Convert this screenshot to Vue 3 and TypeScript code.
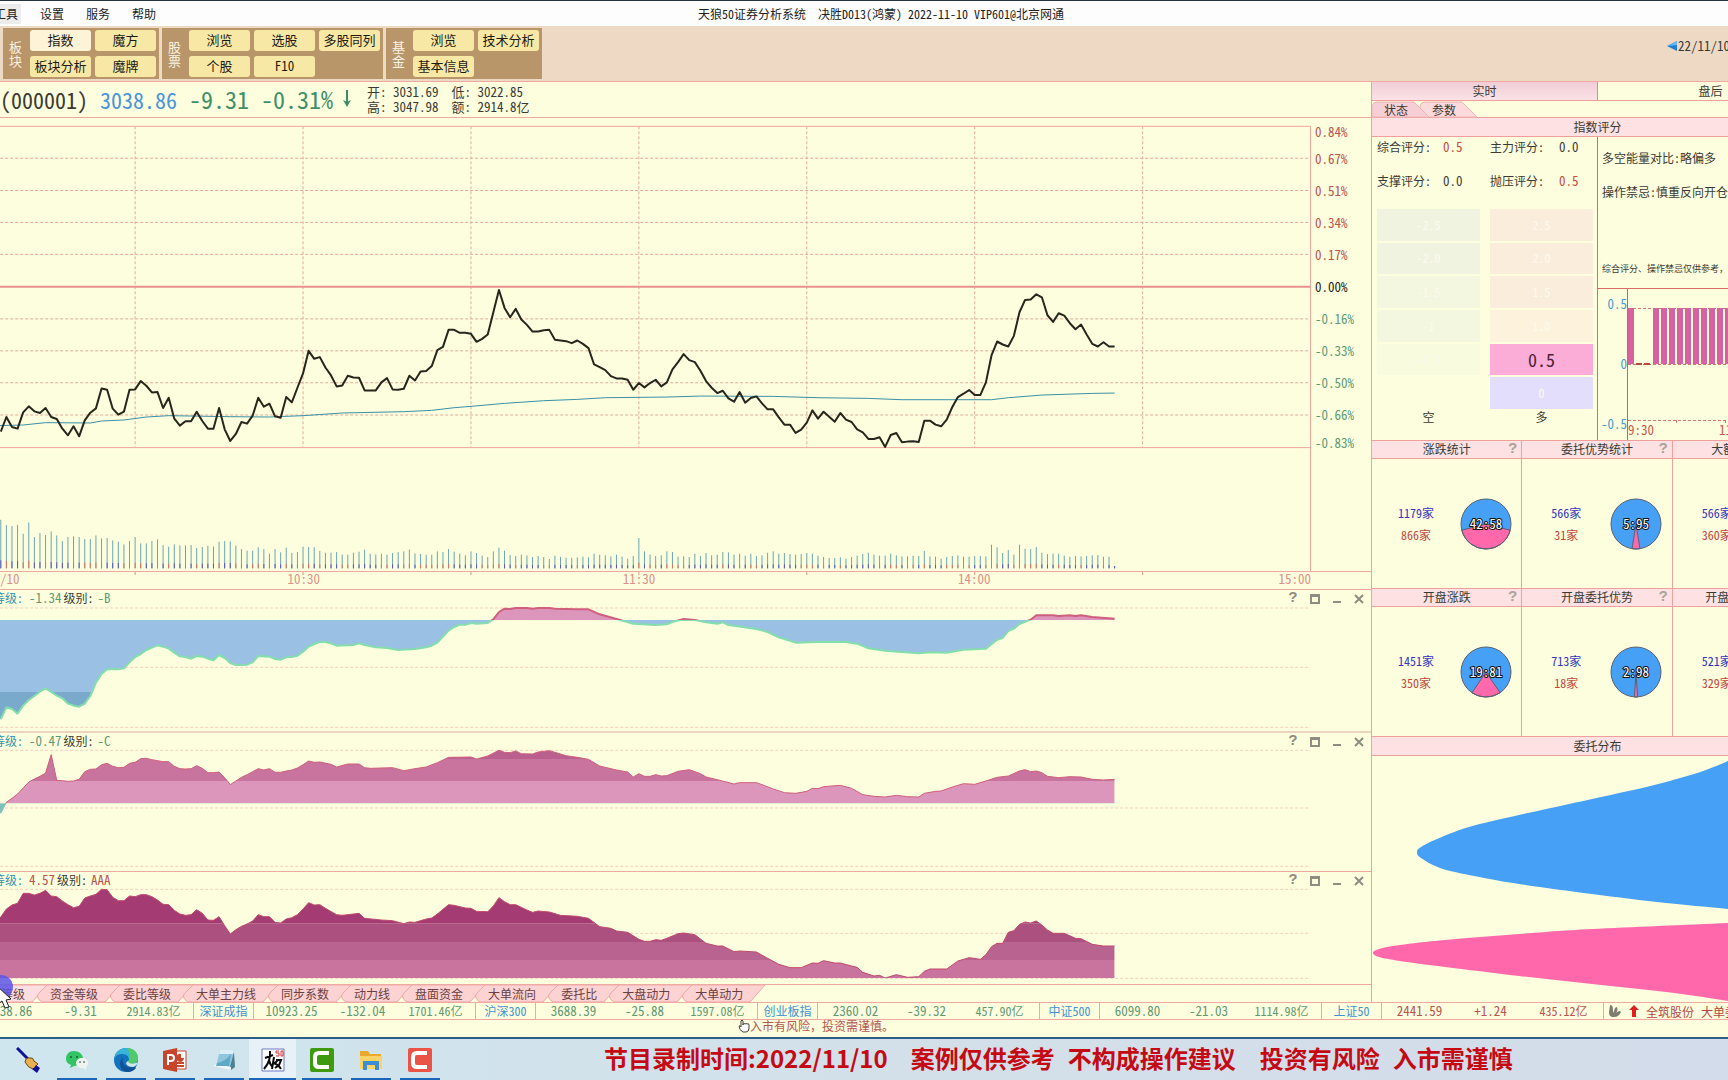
<script setup lang="ts">
type Point = [number, number]

const menus = ['工具', '设置', '服务', '帮助']

const toolGroups = [
  { name: '板块', cols: 2, items: ['指数', '魔方', '板块分析', '魔牌'], active: '指数' },
  { name: '股票', cols: 3, items: ['浏览', '选股', '多股同列', '个股', 'F10'], active: '' },
  { name: '基金', cols: 2, items: ['浏览', '技术分析', '基本信息'], active: '' },
]

const percentLabels = ['0.84%', '0.67%', '0.51%', '0.34%', '0.17%', '0.00%', '-0.16%', '-0.33%', '-0.50%', '-0.66%', '-0.83%']
const timeLabels = ['/10', '10:30', '11:30', '14:00', '15:00']
const gridRows = [115, 212, 308, 404, 598, 694, 790, 887]
const gridMinutes = [24, 54, 84, 114, 144, 174, 204]

/* one value per minute, in chart units counted down from the top */
const price = [
  937, 893, 923, 928, 879, 861, 876, 881, 866, 893, 899, 928, 948, 921, 951, 903, 880, 867, 807, 811,
  868, 886, 877, 811, 810, 785, 799, 819, 818, 866, 835, 898, 919, 906, 906, 877, 905, 928, 928, 866,
  930, 965, 944, 908, 913, 889, 835, 862, 853, 891, 895, 833, 849, 805, 762, 694, 718, 713, 744, 768,
  801, 798, 769, 774, 775, 813, 813, 813, 789, 776, 810, 811, 808, 769, 783, 756, 755, 740, 692, 682,
  631, 631, 640, 640, 643, 667, 658, 645, 578, 511, 565, 593, 568, 600, 616, 636, 636, 632, 631, 661,
  663, 665, 671, 663, 673, 686, 735, 743, 752, 770, 777, 777, 781, 811, 791, 804, 791, 781, 801, 789,
  750, 728, 704, 722, 728, 754, 785, 805, 821, 814, 837, 847, 818, 850, 836, 831, 852, 870, 870, 894,
  916, 916, 941, 931, 910, 873, 898, 877, 892, 907, 881, 901, 908, 930, 939, 959, 959, 954, 983, 947,
  941, 969, 967, 966, 968, 904, 904, 916, 921, 901, 863, 833, 823, 812, 827, 827, 789, 708, 666, 675,
  681, 649, 578, 541, 540, 524, 533, 587, 607, 581, 588, 611, 629, 615, 645, 673, 681, 668, 681, 681,
]

const average: Point[] = [
  [-1, 919], [4, 917], [8, 910], [16, 911], [18, 905], [22, 902], [26, 893], [30, 889], [41, 892], [48, 893],
  [54, 889], [61, 881], [72, 877], [77, 873], [81, 865], [84, 861], [90, 852], [97, 844], [103, 840], [108, 835],
  [119, 833], [125, 830], [138, 831], [146, 835], [155, 837], [161, 841], [177, 841], [180, 835], [186, 827],
  [195, 822], [199, 821],
]

const volume = [
  146, 130, 127, 131, 104, 138, 94, 106, 100, 111, 99, 82, 94, 96, 94, 88, 88, 99, 90, 91,
  84, 80, 72, 82, 94, 75, 75, 82, 87, 70, 65, 72, 69, 69, 70, 61, 64, 68, 66, 80,
  82, 81, 68, 58, 53, 53, 63, 58, 44, 58, 48, 62, 46, 49, 65, 64, 63, 52, 47, 47,
  49, 41, 41, 47, 50, 56, 44, 42, 44, 41, 46, 49, 51, 56, 45, 43, 41, 41, 51, 49,
  58, 50, 44, 39, 51, 46, 38, 34, 51, 62, 53, 40, 37, 41, 39, 34, 37, 34, 28, 38,
  34, 32, 32, 33, 35, 33, 44, 41, 39, 36, 41, 35, 29, 37, 91, 51, 41, 37, 39, 51,
  49, 35, 36, 34, 44, 37, 46, 39, 41, 49, 48, 41, 44, 38, 44, 37, 39, 47, 51, 44,
  46, 43, 41, 43, 46, 44, 38, 34, 31, 31, 33, 29, 34, 38, 43, 47, 41, 38, 38, 44,
  39, 36, 36, 38, 37, 52, 36, 35, 29, 34, 37, 39, 35, 35, 37, 37, 36, 71, 63, 46,
  55, 41, 71, 59, 58, 64, 47, 43, 44, 44, 38, 35, 37, 36, 37, 39, 40, 35, 35, 7,
]
const volumeBase = 1348
const isRise = (i: number) => i > 0 && price[i] < price[i - 1]
const volumePath = volume.map((v, i) => `M${i},${volumeBase}v${-v}`).join('')
const basePath = (rise: boolean) =>
  volume.map((v, i) => (isRise(i) === rise ? `M${i},${volumeBase}v${-Math.round(v * 0.12 + 6)}` : '')).join('')

const line = (pts: Point[]) => pts.map((p) => p.join(',')).join(' ')
const area = (pts: Point[], base: number) => `-1,${base} -1,${pts[0][1]} ${line(pts)} 199,${base}`
const pricePoints = line(price.map((v, i) => [i, v] as Point))

interface Panel {
  id: string
  value: string
  grade: string
  tone: string
  top: number
  height: number
  base: number
  dashes: number[]
  bands: { from: number; to: number; fill: string }[]
  up: string
  down: string
  points: Point[]
}

const panels: Panel[] = [
  {
    id: 'p1', value: '-1.34', grade: '-B', tone: 'down', top: 318, height: 375, base: 360,
    dashes: [324, 502, 682],
    bands: [
      { from: 318, to: 360, fill: '#dd96bb' },
      { from: 360, to: 576, fill: '#9ac0e3' },
      { from: 576, to: 693, fill: '#7aaacb' },
    ],
    up: '#cf5f7c', down: '#84deac',
    points: [
      [0, 658], [1, 622], [2, 627], [3, 641], [4, 617], [5, 600], [6, 588], [7, 575], [8, 565], [9, 576], [10, 587],
      [11, 595], [12, 611], [13, 617], [14, 620], [15, 611], [16, 588], [17, 548], [18, 522], [19, 508], [20, 507],
      [21, 508], [22, 505], [23, 487], [24, 471], [25, 462], [26, 450], [27, 443], [28, 436], [29, 440], [30, 446],
      [31, 458], [32, 469], [33, 471], [34, 476], [35, 468], [36, 470], [37, 476], [38, 481], [39, 465], [40, 474],
      [41, 489], [42, 495], [43, 495], [44, 494], [45, 487], [46, 468], [48, 470], [49, 477], [50, 479], [51, 472],
      [52, 471], [53, 467], [54, 455], [55, 440], [56, 432], [57, 426], [58, 426], [59, 430], [60, 437], [63, 435],
      [64, 430], [65, 435], [67, 442], [69, 444], [71, 450], [74, 447], [76, 442], [77, 437], [78, 428], [79, 410],
      [80, 392], [81, 381], [82, 374], [83, 374], [84, 369], [85, 371], [87, 369], [88, 358], [89, 336], [90, 326],
      [91, 327], [92, 324], [94, 324], [95, 326], [96, 324], [98, 324], [99, 326], [103, 328], [105, 328], [107, 343],
      [110, 357], [113, 371], [117, 375], [119, 373], [120, 366], [122, 357], [124, 360], [126, 367], [128, 371],
      [129, 367], [130, 375], [135, 387], [137, 396], [139, 412], [142, 428], [147, 425], [151, 426], [153, 431],
      [155, 445], [158, 452], [164, 460], [166, 457], [169, 458], [172, 449], [176, 446], [178, 419], [179, 414],
      [180, 393], [181, 386], [182, 372], [184, 359], [185, 346], [188, 346], [189, 348], [191, 346], [192, 348],
      [193, 346], [195, 351], [199, 356],
    ],
  },
  {
    id: 'p2', value: '-0.47', grade: '-C', tone: 'down', top: 747, height: 366, base: 910,
    dashes: [751, 924, 1099],
    bands: [
      { from: 747, to: 777, fill: '#b9608f' },
      { from: 777, to: 843, fill: '#c8749f' },
      { from: 843, to: 910, fill: '#dd96bb' },
      { from: 910, to: 1113, fill: '#7fc0bc' },
    ],
    up: '#cf5f7c', down: '#7fc0bc',
    points: [
      [0, 940], [1, 907], [2, 895], [3, 882], [4, 864], [5, 846], [6, 837], [7, 829], [8, 819], [9, 764], [10, 841],
      [11, 842], [12, 844], [13, 843], [14, 838], [15, 815], [16, 808], [17, 807], [18, 794], [19, 790], [20, 799],
      [21, 803], [22, 802], [23, 790], [24, 787], [25, 776], [26, 775], [27, 779], [28, 782], [29, 785], [30, 785],
      [31, 799], [32, 806], [33, 807], [34, 806], [35, 797], [36, 805], [37, 818], [38, 818], [39, 816], [40, 833],
      [41, 854], [42, 843], [43, 832], [44, 824], [45, 815], [46, 806], [47, 810], [48, 806], [49, 817], [50, 817],
      [51, 813], [52, 810], [53, 804], [54, 794], [55, 783], [56, 787], [57, 786], [59, 793], [60, 801], [62, 792],
      [64, 792], [65, 803], [66, 805], [70, 803], [72, 812], [74, 806], [76, 801], [78, 788], [80, 772], [84, 771],
      [85, 777], [87, 768], [89, 751], [90, 757], [91, 758], [92, 753], [93, 761], [95, 762], [96, 756], [98, 752],
      [99, 757], [101, 767], [103, 772], [105, 778], [107, 798], [110, 810], [112, 816], [113, 831], [114, 821],
      [115, 829], [116, 829], [117, 824], [118, 828], [119, 827], [121, 814], [123, 809], [125, 821], [126, 831],
      [128, 839], [131, 852], [132, 848], [135, 848], [136, 854], [138, 867], [140, 878], [142, 880], [144, 874],
      [145, 865], [146, 866], [147, 860], [150, 856], [152, 865], [154, 884], [156, 889], [158, 891], [160, 886],
      [162, 890], [164, 891], [165, 880], [167, 874], [168, 873], [170, 861], [172, 851], [174, 853], [176, 843],
      [178, 832], [180, 828], [182, 813], [183, 809], [184, 815], [185, 813], [186, 818], [187, 829], [189, 833],
      [191, 830], [193, 831], [195, 838], [197, 840], [199, 838],
    ],
  },
  {
    id: 'p3', value: '4.57', grade: 'AAA', tone: 'up', top: 324, height: 288, base: 594,
    dashes: [328, 460, 595],
    bands: [
      { from: 324, to: 431, fill: '#a53b73' },
      { from: 431, to: 486, fill: '#ac5080' },
      { from: 486, to: 540, fill: '#b96490' },
      { from: 540, to: 594, fill: '#c8749f' },
    ],
    up: '#c04a6c', down: '#84deac',
    points: [
      [0, 411], [1, 387], [2, 375], [3, 370], [4, 340], [5, 340], [6, 345], [7, 340], [8, 331], [9, 348], [10, 350],
      [11, 363], [12, 374], [13, 383], [14, 379], [15, 354], [16, 348], [17, 343], [18, 328], [19, 329], [20, 352],
      [21, 362], [22, 362], [23, 348], [24, 350], [25, 344], [26, 344], [27, 350], [28, 360], [29, 373], [30, 374],
      [31, 391], [32, 402], [33, 406], [34, 404], [35, 389], [36, 400], [37, 420], [38, 421], [39, 410], [40, 437],
      [41, 462], [42, 449], [43, 439], [44, 432], [45, 423], [46, 404], [47, 410], [48, 410], [49, 427], [50, 429],
      [51, 417], [52, 413], [53, 404], [54, 387], [55, 368], [56, 375], [57, 374], [58, 385], [60, 404], [61, 406],
      [63, 402], [64, 400], [65, 415], [68, 420], [70, 422], [72, 431], [73, 426], [74, 427], [76, 417], [77, 414],
      [78, 402], [79, 388], [80, 374], [81, 376], [83, 384], [84, 385], [85, 394], [87, 395], [88, 378], [89, 353],
      [90, 365], [91, 374], [92, 374], [94, 390], [95, 397], [96, 393], [98, 396], [100, 406], [103, 409], [105, 415],
      [107, 440], [109, 445], [110, 453], [112, 457], [114, 478], [115, 484], [116, 484], [117, 479], [118, 481],
      [119, 475], [121, 461], [122, 459], [124, 464], [126, 490], [128, 498], [129, 498], [131, 515], [132, 513],
      [135, 516], [137, 535], [139, 553], [141, 563], [143, 563], [145, 549], [146, 550], [147, 542], [149, 549],
      [150, 549], [152, 558], [153, 562], [154, 577], [156, 588], [157, 586], [158, 594], [160, 584], [162, 592],
      [164, 590], [165, 574], [166, 567], [169, 567], [171, 543], [173, 533], [175, 538], [176, 524], [177, 500],
      [178, 490], [179, 490], [180, 457], [181, 452], [182, 433], [183, 426], [184, 429], [185, 423], [186, 435],
      [187, 450], [188, 460], [190, 460], [192, 475], [193, 476], [195, 493], [197, 498], [199, 498],
    ],
  },
]

const indicatorTabs = ['等级', '资金等级', '委比等级', '大单主力线', '同步系数', '动力线', '盘面资金', '大单流向', '委托比', '大盘动力', '大单动力']
const tabShape = (name: string) => {
  const w = name.length * 12 + 25
  return `M10,0H${w + 10}L${w - 5},17H5Q-3,12 3,7Z`
}

const scores = [
  { name: '综合评分:', value: '0.5', hot: true },
  { name: '主力评分:', value: '0.0', hot: false },
  { name: '支撑评分:', value: '0.0', hot: false },
  { name: '抛压评分:', value: '0.5', hot: true },
]
const bearCells = ['-2.5', '-2.0', '-1.5', '-1', '-0.5', '']
const bullCells = ['2.5', '2.0', '1.5', '1.0', '0.5', '0']
const scoreBars = [0, ...Array.from({ length: 21 }, (_, i) => 25 + i * 8)]

const stats = [
  { name: '涨跌统计', a: '1179家', b: '866家', ratio: '42:58', share: 42 },
  { name: '委托优势统计', a: '566家', b: '31家', ratio: '5:95', share: 5 },
  { name: '大额委托统计', a: '566家', b: '360家', ratio: '39:61', share: 39 },
  { name: '开盘涨跌', a: '1451家', b: '350家', ratio: '19:81', share: 19 },
  { name: '开盘委托优势', a: '713家', b: '18家', ratio: '2:98', share: 2 },
  { name: '开盘大额优势比', a: '521家', b: '329家', ratio: '39:61', share: 39 },
]
const slice = (share: number) => {
  const half = (share / 100) * Math.PI
  const dx = (25 * Math.sin(half)).toFixed(2)
  const dy = (25 * Math.cos(half)).toFixed(2)
  return `M0,0L${dx},${dy}A25,25 0 0 1 -${dx},${dy}Z`
}

/* a curve that runs through every point */
const smooth = (pts: Point[]) => {
  let d = `M${pts[0].join(',')}`
  for (let i = 0; i < pts.length - 1; i++) {
    const a = pts[Math.max(i - 1, 0)]
    const b = pts[i]
    const c = pts[i + 1]
    const e = pts[Math.min(i + 2, pts.length - 1)]
    d += `C${b[0] + (c[0] - a[0]) / 6},${b[1] + (c[1] - a[1]) / 6} ${c[0] - (e[0] - b[0]) / 6},${c[1] - (e[1] - b[1]) / 6} ${c[0]},${c[1]}`
  }
  return d + 'Z'
}
const sellShape = smooth([
  [451, -44], [356, 5], [294, 26], [220, 43], [147, 59], [97, 71], [65, 83], [49, 91], [45, 96], [49, 102], [68, 112],
  [97, 119], [147, 128], [220, 138], [294, 147], [356, 153], [451, 163],
])
const buySideShape = smooth([
  [451, 162], [356, 167], [220, 173], [147, 178], [73, 184], [28, 189], [7, 193], [1, 197], [7, 201], [28, 205], [73, 211],
  [147, 220], [220, 228], [294, 236], [356, 245], [451, 262],
])

const quotes = [
  { name: '上证指数', last: '3038.86', change: '-9.31', amount: '2914.83亿', tone: 'down' },
  { name: '深证成指', last: '10923.25', change: '-132.04', amount: '1701.46亿', tone: 'down' },
  { name: '沪深300', last: '3688.39', change: '-25.88', amount: '1597.08亿', tone: 'down' },
  { name: '创业板指', last: '2360.02', change: '-39.32', amount: '457.90亿', tone: 'down' },
  { name: '中证500', last: '6099.80', change: '-21.03', amount: '1114.98亿', tone: 'down' },
  { name: '上证50', last: '2441.59', change: '+1.24', amount: '435.12亿', tone: 'up' },
]

const notices = ['节目录制时间:2022/11/10', '案例仅供参考', '不构成操作建议', '投资有风险', '入市需谨慎']
</script>

<template>
  <div class="app">
    <header class="titlebar">
      <nav class="menu">
        <button v-for="m in menus" :key="m" type="button">{{ m }}</button>
      </nav>
      <h1>天狼50证券分析系统&nbsp;&nbsp;决胜D013(鸿蒙) 2022-11-10 VIP601@北京网通</h1>
    </header>

    <div class="toolbar">
      <section v-for="g in toolGroups" :key="g.name" class="group">
        <span class="group-name">{{ g.name }}</span>
        <div class="group-items" :class="'cols' + g.cols">
          <button v-for="b in g.items" :key="b" type="button" :class="{ active: b === g.active }">{{ b }}</button>
        </div>
      </section>
      <div class="date">
        <svg width="10" height="10" viewBox="0 0 10 10"><path d="M0 5 10 0v10z" fill="#1f7fd6" /><path d="M1 5 10 0v4z" fill="#6db7f0" /></svg>
        <span>22/11/10</span>
      </div>
    </div>

    <main class="body">
      <div class="left">
        <div class="quote">
          <div class="big">
            <span class="code">(000001)</span><span class="last">3038.86</span><span class="chg">-9.31</span><span class="pct">-0.31%</span>
            <svg width="8" height="18" viewBox="0 0 8 18"><path d="M4 0v13" stroke="#3a8f62" stroke-width="2" /><path d="M0 10 4 17l4-7-4 2z" fill="#3a8f62" /></svg>
          </div>
          <div class="ohlc">
            <p>开: 3031.69&nbsp; 低: 3022.85</p>
            <p>高: 3047.98&nbsp; 额: 2914.8亿</p>
          </div>
        </div>

        <div class="price">
          <svg class="plot price-plot" viewBox="-0.14 -6 234.4 1362" preserveAspectRatio="none">
            <g class="dash">
              <path v-for="y in gridRows" :key="y" :d="`M-1,${y}H234`" />
              <path v-for="x in gridMinutes" :key="x" :d="`M${x},19V985`" />
            </g>
            <path class="frame" d="M-1,19H234V1356M-1,985H234" />
            <path class="zero" d="M-1,501H234" />
            <path class="vol" :d="volumePath" />
            <path class="vol-rise" :d="basePath(true)" />
            <path class="vol-fall" :d="basePath(false)" />
            <polyline class="avg" :points="line(average)" />
            <polyline class="now" :points="pricePoints" />
          </svg>
          <ul class="percent">
            <li v-for="p in percentLabels" :key="p" :class="p[0] === '-' ? 'down' : p === '0.00%' ? 'flat' : 'up'">{{ p }}</li>
          </ul>
        </div>
        <div class="times">
          <svg class="ticks" viewBox="-0.14 0 234.4 3" preserveAspectRatio="none">
            <path v-for="x in gridMinutes" :key="x" :d="`M${x},0V3`" />
          </svg>
          <div class="time-row"><span v-for="t in timeLabels" :key="t">{{ t }}</span></div>
        </div>

        <section v-for="p in panels" :key="p.id" class="panel" :class="p.id">
          <div class="panel-head">
            <p class="legend">
              <span class="lv">等级:</span>&nbsp;<span class="num" :class="p.tone">{{ p.value }}</span><span class="gd">级别:</span><span class="num" :class="p.tone">{{ p.grade }}</span>
            </p>
            <div class="tools">
              <button type="button" aria-label="帮助">?</button>
              <button type="button" aria-label="放大"><svg width="10" height="10"><path d="M1 1h8v8H1zM1 2h8" /></svg></button>
              <button type="button" aria-label="缩小"><svg width="10" height="10"><path d="M1 8h8" /></svg></button>
              <button type="button" aria-label="关闭"><svg width="10" height="10"><path d="M1 1l8 8M9 1 1 9" /></svg></button>
            </div>
          </div>
          <svg class="plot" :viewBox="`-0.14 ${p.top} 234.4 ${p.height}`" preserveAspectRatio="none">
            <defs>
              <clipPath :id="p.id + '-area'"><polygon :points="area(p.points, p.base)" /></clipPath>
              <clipPath :id="p.id + '-up'"><rect x="-1" :y="p.top - 6" width="240" :height="p.base - p.top + 6" /></clipPath>
              <clipPath :id="p.id + '-down'"><rect x="-1" :y="p.base" width="240" height="400" /></clipPath>
            </defs>
            <g class="dash soft"><path v-for="y in p.dashes" :key="y" :d="`M-1,${y}H234`" /></g>
            <g :clip-path="`url(#${p.id}-area)`">
              <rect v-for="b in p.bands" :key="b.from" x="-1" :y="b.from" width="240" :height="b.to - b.from" :fill="b.fill" />
            </g>
            <polyline class="edge" :points="line(p.points)" :stroke="p.up" :clip-path="`url(#${p.id}-up)`" />
            <polyline class="edge" :points="line(p.points)" :stroke="p.down" :clip-path="`url(#${p.id}-down)`" />
          </svg>
        </section>

        <nav class="tabs">
          <button v-for="(t, i) in indicatorTabs" :key="t" type="button" :class="{ current: i === 0 }">
            <svg width="10" height="17"><path :d="tabShape(t)" /></svg><span>{{ t }}</span>
          </button>
        </nav>
      </div>

      <aside class="right">
        <div class="side">
          <div class="modes">
            <button type="button" class="on">实时</button>
            <button type="button">盘后</button>
          </div>
          <div class="subtabs">
            <button type="button" class="on"><svg width="48" height="16"><path d="M0,16V5Q1,1 5,1H42L57,16Z" /></svg><span>状态</span></button>
            <button type="button"><svg width="48" height="16"><path d="M0,16V5Q1,1 5,1H42L57,16Z" /></svg><span>参数</span></button>
          </div>
          <h2>指数评分</h2>
          <div class="rating">
            <div class="rating-left">
              <dl>
                <div v-for="s in scores" :key="s.name"><dt>{{ s.name }}</dt><dd :class="{ hot: s.hot }">{{ s.value }}</dd></div>
              </dl>
              <div class="ladders">
                <div class="ladder bear"><span v-for="(c, i) in bearCells" :key="i">{{ c }}</span></div>
                <div class="ladder bull"><span v-for="(c, i) in bullCells" :key="i">{{ c }}</span></div>
                <p>空</p>
                <p>多</p>
              </div>
            </div>
            <div class="rating-right">
              <div class="advice">
                <p>多空能量对比:略偏多</p>
                <p>操作禁忌:慎重反向开仓</p>
                <small>综合评分、操作禁忌仅供参考，不作依据</small>
              </div>
              <div class="mini">
                <div class="mini-y"><span>0.5</span><span>0</span><span>-0.5</span></div>
                <div class="mini-plot">
                  <svg width="195" height="135" viewBox="0 0 195 135">
                    <path class="mini-dash" d="M0,19.5H195M0,75.5H195M0,131.5H195" />
                    <path class="mini-solid" d="M48.5,131v3M97.5,131v3" />
                    <rect v-for="x in scoreBars" :key="x" :x="x" y="19" width="6" height="56" fill="#d8629f" />
                    <path class="mini-zero" d="M8,75h6M16,75h6" />
                  </svg>
                  <p><span>9:30</span><span>11:30</span></p>
                </div>
              </div>
            </div>
          </div>

          <div class="stats">
            <section v-for="s in stats" :key="s.name">
              <h3>{{ s.name }}<button type="button" aria-label="说明">?</button></h3>
              <div class="stat">
                <p><span class="a">{{ s.a }}</span><span class="b">{{ s.b }}</span></p>
                <svg width="52" height="52" viewBox="-26 -26 52 52">
                  <circle r="25" fill="#45a0f6" />
                  <path :d="slice(s.share)" fill="#ff69ac" stroke="#5a6070" />
                  <circle r="25" fill="none" stroke="#5a6070" />
                  <text y="5" text-anchor="middle">{{ s.ratio }}</text>
                </svg>
              </div>
            </section>
          </div>

          <h2>委托分布</h2>
          <svg class="dist" width="451" height="246" viewBox="0 0 451 246">
            <path fill="#45a0f6" :d="sellShape" />
            <path fill="#ff69ac" :d="buySideShape" />
          </svg>
        </div>
      </aside>
    </main>

    <div class="ticker">
      <div v-for="q in quotes" :key="q.name" class="tick">
        <a href="#">{{ q.name }}</a>
        <span :class="q.tone">{{ q.last }}</span>
        <span :class="q.tone">{{ q.change }}</span>
        <span class="amount" :class="q.tone">{{ q.amount }}</span>
      </div>
      <div class="alert">
        <svg width="14" height="14" viewBox="0 0 14 14"><path d="M2 1c3 0 3 3 3 6l1 2C6 5 7 3 9 3c1 2 0 5-1 6 2-2 4-3 5-1-1 3-4 5-7 5C2 13 1 11 1 8z" fill="#7d7d72" /></svg>
        <svg width="10" height="14" viewBox="0 0 10 14"><path d="M5 1 0 6h3v7h4V6h3z" fill="#e02020" /></svg>
        <span>全筑股份</span><span>大单委托</span>
      </div>
    </div>

    <div class="marquee">
      <svg width="12" height="14" viewBox="0 0 12 14"><path d="M3 7V2q1-2 2 0v4-1q1-1 2 0 1-1 2 0 2-1 2 1v3q0 4-3 4H5Q1 11 1 7q1-1 2 1z" fill="#fff" stroke="#444" /></svg>
      <span>入市有风险，投资需谨慎。</span>
    </div>

    <footer class="taskbar">
      <div class="apps">
        <button type="button" class="idle" aria-label="画笔">
          <svg width="24" height="26" viewBox="0 0 24 26"><path d="M1 1l12 12" stroke="#10109a" stroke-width="3" /><path d="M9 15q1-5 5-4 3-1 4 3l4 3-5 5q-5-1-8-7z" fill="#e8b050" stroke="#6a4a10" /><path d="M16 22q3-1 4-4l4 3-3 5z" fill="#10109a" /></svg>
        </button>
        <button type="button" aria-label="微信">
          <svg width="24" height="24" viewBox="0 0 24 24"><path d="M9 3c5 0 9 3 9 8 0 4-4 7-9 7l-4 2 1-3c-3-1-5-3-5-6 0-5 3-8 8-8z" fill="#32c464" /><circle cx="6" cy="9" r="1" fill="#186030" /><circle cx="12" cy="9" r="1" fill="#186030" /><path d="M17 10c4 0 6 2 6 5 0 2-1 3-2 4v3l-3-2c-4 0-7-2-7-5s3-5 6-5z" fill="#eef4f0" /><circle cx="15" cy="14" r="1" fill="#777" /><circle cx="19" cy="14" r="1" fill="#777" /></svg>
        </button>
        <button type="button" aria-label="浏览器">
          <svg width="24" height="24" viewBox="0 0 24 24"><circle cx="12" cy="12" r="12" fill="#1573bd" /><path d="M0 12C1 4 6 0 12 0s12 4 12 10c0 4-3 6-7 6-3 0-4-2-2-4 0-4-3-6-7-6-4 0-7 2-8 6z" fill="#35b6d8" /><path d="M13 0c6 0 11 4 11 10 0 4-3 6-7 6-3 0-4-2-2-4 1-5 0-9-2-12z" fill="#52c96a" /><path d="M9 9c-2 7 3 12 12 10l1 1c-3 4-8 5-12 3-5-3-5-10-1-14z" fill="#0f5296" /><path d="M14 13q1 4 8 2l2-1q-1 4-5 5-6 0-7-4z" fill="#d3e7ef" /></svg>
        </button>
        <button type="button" aria-label="演示文稿">
          <svg width="24" height="24" viewBox="0 0 24 24"><path d="M12 3h11v18H12z" fill="#fff" stroke="#c8452c" /><path d="M14 15h7M14 18h7" stroke="#c8452c" stroke-width="2" /><path d="M18 6v4h3a4 4 0 1 1-3-4z" fill="#c8452c" /><path d="M0 3 14 0v24L0 21z" fill="#c8452c" /><path d="M5 17V7h3q3 0 3 3t-3 3H5" fill="none" stroke="#fff" stroke-width="2" /></svg>
        </button>
        <button type="button" aria-label="记事本">
          <svg width="24" height="24" viewBox="0 0 24 24"><path d="M8 2h13q1 0 1 2l-3 15H4z" fill="#8fc6de" /><path d="M8 2h13q1 0 1 2l-1 2H7z" fill="#d9eef5" /><path d="M22 4l1 15-4 3-1-3z" fill="#4f7f92" /><path d="M1 18l3-2 15 3v3z" fill="#f2f6f8" /><path d="M5 15q8-1 14-9l-2 12H4z" fill="#5fa9c8" /></svg>
        </button>
        <button type="button" class="current" aria-label="天狼50">
          <svg width="24" height="24" viewBox="0 0 24 24"><path d="M1 1h22v22H1z" fill="#fff" stroke="#6f79c8" /><path d="M4 10l8-3M9 3q1 10-6 18M8 12q1 5 4 7M13 9l-2 12M17 12l-4 4M12 15q5 1 8 6M15 12h5l-2 5-4 3" fill="none" stroke="#0a0a0a" stroke-width="2" /><path d="M18 3h-3v2h3v3h-3M20 3h2v5h-2z" fill="none" stroke="#d33" /></svg>
        </button>
        <button type="button" aria-label="录制">
          <svg width="24" height="24" viewBox="0 0 24 24"><rect width="24" height="24" rx="2" fill="#3f9a10" /><path d="M19 5H9Q5 5 5 9v6q0 4 4 4h10" fill="none" stroke="#fff" stroke-width="4" /></svg>
        </button>
        <button type="button" aria-label="资源管理器">
          <svg width="24" height="24" viewBox="0 0 24 24"><path d="M1 3h8l2 3h11v15H1z" fill="#e9a92c" /><path d="M1 8h22v13H1z" fill="#fbd367" /><path d="M4 22v-9h16v9h-4v-5H8v5z" fill="#3b8fd0" /></svg>
        </button>
        <button type="button" aria-label="录屏">
          <svg width="24" height="24" viewBox="0 0 24 24"><rect width="24" height="24" rx="2" fill="#ea5447" /><path d="M19 5H9Q5 5 5 9v6q0 4 4 4h10" fill="none" stroke="#fff" stroke-width="4" /></svg>
        </button>
      </div>
      <p class="notice"><span v-for="n in notices" :key="n">{{ n }}</span></p>
    </footer>

    <svg class="pointer" width="16" height="34" viewBox="0 0 16 34">
      <circle cx="1" cy="12" r="12" fill="#5a55e8" opacity="0.85" />
      <path d="M-4,10 11,24 6,25 9,32 5,33 2,26 -2,29Z" fill="#fff" stroke="#222" />
    </svg>
  </div>
</template>

<style>
body {
  margin: 0;
  background: #fdfede;
}
</style>

<style scoped>
.app {
  position: relative;
  display: flex;
  flex-direction: column;
  min-height: 100vh;
  overflow: hidden;
  background: #fdfede;
  color: #3a3a34;
  font-family: "Noto Sans Mono CJK SC", "Noto Sans CJK SC", "Liberation Mono", monospace;
  font-size: 12px;
  line-height: 16px;
}
h1, h2, h3, p, ul, dl, dd { margin: 0; padding: 0; font-weight: 400; font-size: 12px; }
ul { list-style: none; }
button {
  margin: 0;
  padding: 0;
  border: 0;
  background: none;
  color: inherit;
  font: inherit;
}
a { color: #3f93d0; text-decoration: none; }
.up { color: #b85450; }
.down { color: #5f9a74; }
.flat { color: #222; }

.titlebar {
  display: grid;
  grid-template-columns: 1fr auto 1fr;
  align-items: center;
  height: 24px;
  padding-top: 1px;
  border-top: 1px solid #26323c;
  background: #fdfdfd;
  color: #222;
}
.menu { display: flex; margin-left: -17px; }
.menu button { padding: 2px 11px; }
.menu button:first-child { padding-right: 3px; margin-right: 8px; background: #ececec; }
.titlebar h1 { padding-left: 34px; white-space: pre; }

.toolbar {
  display: flex;
  align-items: flex-start;
  gap: 3px;
  height: 53px;
  padding: 2px 0 0 3px;
  border-bottom: 1px solid #efa9a0;
  background: #eedac4;
}
.group {
  display: flex;
  align-items: center;
  height: 51px;
  padding-right: 3px;
  background: #b9966a;
}
.group-name {
  width: 13px;
  padding: 0 8px 0 6px;
  color: #fbf3e6;
  font-size: 13px;
  line-height: 14px;
  word-break: break-all;
}
.group-items { display: grid; gap: 5px 4px; }
.cols2 { grid-template-columns: repeat(2, 61px); }
.cols3 { grid-template-columns: repeat(3, 61px); }
.group-items button {
  height: 21px;
  padding-bottom: 2px;
  border-radius: 3px;
  background: #f8e8a6;
  color: #1c1a12;
  font-size: 13px;
  line-height: 19px;
  white-space: nowrap;
}
.group-items button.active { background: #fdf3d6; }
.date {
  display: flex;
  align-items: center;
  gap: 1px;
  flex: none;
  margin: 10px -2px 0 auto;
  font-size: 13px;
}

.body { display: grid; grid-template-columns: minmax(0, 1fr) 356px; }
.left { min-width: 0; border-right: 1px solid #efa09c; overflow: hidden; }

.quote {
  display: flex;
  align-items: center;
  height: 33px;
  padding-bottom: 2px;
  border-bottom: 1px solid #efa9a0;
}
.big { display: flex; align-items: center; gap: 12px; width: 367px; font-size: 22px; }
.big .last { color: #4a94dc; }
.big .chg, .big .pct { color: #3f8f66; font-size: 24px; }
.big svg { margin-left: -2px; }
.ohlc p { font-size: 13px; line-height: 15px; }

.price { display: flex; border-bottom: 1px solid #efa9a0; }
.plot { display: block; flex: 1; min-width: 0; width: 100%; }
.plot path, .plot polyline { vector-effect: non-scaling-stroke; fill: none; }
.price-plot { height: 453px; }
.percent { flex: none; width: 56px; padding: 3px 0 0 3px; }
.percent li { height: 32px; font-size: 13px; line-height: 32px; }
.percent li:first-child { height: 22px; line-height: 22px; }
.percent li:last-child { height: 24px; line-height: 24px; }
.dash { stroke: #e2aa9c; stroke-dasharray: 3 2; }
.soft { stroke: #f3cdbf; }
.frame { stroke: #efa59c; }
.zero { stroke: #e8918c; stroke-width: 2; }
.vol { stroke: #6aa6b2; shape-rendering: crispEdges; }
.vol-rise { stroke: #e2705a; shape-rendering: crispEdges; }
.vol-fall { stroke: #5c56c0; shape-rendering: crispEdges; }
.avg { stroke: #3a90a8; }
.now { stroke: #26261c; stroke-width: 2; stroke-linejoin: round; }

.times { border-bottom: 1px solid #efa9a0; color: #dd9088; }
.ticks { display: block; width: calc(100% - 59px); height: 3px; }
.ticks path { stroke: #dd9088; vector-effect: non-scaling-stroke; }
.time-row {
  display: grid;
  grid-template-columns: 136fr 335fr 335fr 335fr 169fr;
  margin-right: 60px;
  font-size: 13px;
  line-height: 8px;
  height: 14px;
  text-align: center;
}
.time-row span:first-child { text-align: left; }
.time-row span:last-child { text-align: right; }

.panel { border-bottom: 1px solid #efa9a0; }
.p1 { border-bottom: 2px solid #ead6c0; }
.panel-head { display: flex; justify-content: space-between; height: 16px; }
.panel .plot { width: calc(100% - 59px); }
.p1 .plot { height: 125px; }
.p2 .plot { height: 122px; }
.p3 .plot { height: 96px; }
.legend { margin-left: -7px; white-space: nowrap; }
.num { font-size: 13px; }
.lv { color: #3792ae; }
.gd { margin: 0 4px 0 2px; }
.edge { stroke-width: 1; stroke-linejoin: round; }
.p1 .edge { stroke-width: 2; }
.tools { display: flex; gap: 12px; margin-right: 7px; padding-top: 1px; color: #8d8d80; }
.tools button { display: flex; align-items: center; justify-content: center; width: 10px; font-family: "Liberation Mono", monospace; font-size: 15px; font-weight: 700; }
.tools path { fill: none; stroke: #8d8d80; stroke-width: 2; }

.tabs { display: flex; height: 17px; margin-left: -12px; }
.tabs button { position: relative; flex: none; padding: 0 12px 0 13px; line-height: 16px; }
.tabs svg { position: absolute; left: 0; top: 0; overflow: visible; }
.tabs path { fill: #fcd2d2; stroke: #eda8a4; }
.tabs .current path { fill: #fbdfe0; }
.tabs span { position: relative; color: #6a3f44; }

.right { overflow: hidden; }
.side { width: 451px; }
.modes { display: grid; grid-template-columns: 226px 1fr; height: 18px; border-bottom: 1px solid #efa09c; }
.modes button { line-height: 18px; }
.modes .on { border-right: 1px solid #e78888; background: linear-gradient(#f0cdd6, #fbe2e6); }
.subtabs { display: flex; height: 16px; }
.subtabs button { position: relative; width: 48px; line-height: 17px; }
.subtabs svg { position: absolute; left: 0; top: 0; overflow: visible; }
.subtabs path { fill: #fcd9db; stroke: #f0b4b4; }
.subtabs .on { z-index: 1; }
.subtabs .on path { fill: #f6cfd6; }
.subtabs span { position: relative; }
.side h2 {
  height: 18px;
  border: solid #efa09c;
  border-width: 1px 0;
  background: #fde1e3;
  line-height: 17px;
  text-align: center;
}

.rating { display: grid; grid-template-columns: 226px 1fr; height: 303px; }
.rating-left { border-right: 1px solid #dd6a66; padding: 0 5px; }
.rating-left dl { display: grid; grid-template-columns: repeat(2, 113px); padding-bottom: 4px; }
.rating-left dl div { display: flex; height: 34px; line-height: 19px; }
.rating-left dt { width: 66px; }
.rating-left div:nth-child(even) dt { width: 69px; }
.rating-left dd { font-size: 13px; }
.rating-left .hot { color: #c9483f; }
.ladders { display: grid; grid-template-columns: 103px 103px; column-gap: 10px; text-align: center; }
.ladder { display: grid; grid-template-rows: repeat(6, 1fr); row-gap: 2px; height: 200px; }
.ladder span { display: flex; align-items: center; justify-content: center; color: #fbfaf0; }
.bear span { background: #f0f3e0; }
.bear span:nth-child(3), .bear span:nth-child(4) { background: #f3f7df; }
.bear span:nth-child(5) { background: #f8fbde; }
.bear span:nth-child(6) { background: none; }
.bull span { background: #fbeddb; }
.bull span:nth-child(4) { background: #fdf3dd; }
.bull span:nth-child(5) { background: #fbacd7; color: #4b2238; font-size: 18px; }
.bull span:nth-child(6) { background: #e4defd; }

.rating-right { display: flex; flex-direction: column; }
.advice { height: 140px; padding: 11px 0 0 4px; border-bottom: 1px solid #dd6a66; white-space: nowrap; }
.advice p { height: 34px; line-height: 20px; }
.advice small { display: block; margin-top: 46px; font-size: 9px; line-height: 14px; }
.mini { display: flex; height: 151px; }
.mini-y {
  display: flex;
  flex-direction: column;
  gap: 44px;
  width: 29px;
  padding-top: 7px;
  border-right: 1px solid #d85c58;
  color: #4a98cc;
  font-size: 13px;
  text-align: right;
}
.mini-plot svg { display: block; }
.mini-plot p { display: flex; gap: 65px; color: #c9564e; font-size: 13px; line-height: 11px; }
.mini-dash { fill: none; stroke: #d07a70; stroke-dasharray: 3 2; }
.mini-solid { stroke: #d07a70; }
.mini-zero { stroke: #b84a3c; stroke-width: 2; }

.stats { display: grid; grid-template-columns: repeat(3, 1fr); }
.stats section { border-right: 1px solid #efa09c; }
.stats h3 {
  position: relative;
  height: 17px;
  border: solid #efa09c;
  border-width: 1px 0;
  background: #fde1e3;
  line-height: 16px;
  text-align: center;
}
.stats h3 button {
  position: absolute;
  right: 4px;
  top: 1px;
  color: #a9a49c;
  font-family: "Liberation Mono", monospace;
  font-size: 15px;
  font-weight: 700;
}
.stat { display: flex; align-items: center; height: 129px; }
.stat p { display: flex; flex-direction: column; gap: 6px; width: 88px; text-align: center; }
.stat .a { color: #3434bc; }
.stat .b { color: #c0463c; }
.stat text {
  fill: #fff;
  stroke: #111;
  stroke-width: 2;
  paint-order: stroke;
  font-size: 13px;
}
.dist { display: block; overflow: hidden; }

.ticker {
  display: flex;
  height: 16px;
  border: solid #efa9a0;
  border-width: 1px 0;
  overflow: hidden;
  line-height: 15px;
  white-space: nowrap;
}
.tick {
  display: grid;
  flex: none;
  grid-template-columns: 60px 75px 67px 1fr;
  width: 282px;
  border-left: 1px solid #efa9a0;
  box-sizing: border-box;
  text-align: center;
}
.tick:first-child { margin-left: -89px; }
.tick a { border-right: 1px solid #efa9a0; }
.tick span { font-size: 13px; }
.tick .amount { font-size: 12px; }
.alert { display: flex; align-items: center; gap: 7px; padding-left: 4px; border-left: 1px solid #efa9a0; color: #b04a44; }
.alert svg { flex: none; }

.marquee {
  display: flex;
  align-items: center;
  justify-content: center;
  height: 12px;
  padding: 0 96px 5px 0;
  color: #b35550;
  line-height: 12px;
}

.taskbar {
  display: flex;
  height: 41px;
  border-top: 2px solid #2b5f86;
  background: linear-gradient(90deg, #cfe6ee, #d3dfe9 60%, #d2dcea);
}
.apps { display: flex; gap: 2px; padding-left: 4px; }
.apps button { display: flex; align-items: center; justify-content: center; width: 47px; height: 41px; background: linear-gradient(#1b66b8, #1b66b8) center bottom / 40px 2px no-repeat; }
.apps .idle { background: none; }
.apps .current { background: linear-gradient(#1b66b8, #1b66b8) center bottom / 47px 2px no-repeat, #e9f1f8; }
.notice {
  display: flex;
  gap: 13px;
  margin-left: 161px;
  color: #c50a14;
  font-family: "Noto Sans CJK SC", sans-serif;
  font-size: 24px;
  font-weight: 700;
  line-height: 38px;
  white-space: nowrap;
}
.notice span:first-child { margin-right: 10px; }
.notice span:nth-child(4) { margin-left: 11px; }

.pointer { position: absolute; left: 0; bottom: 71px; }
</style>
